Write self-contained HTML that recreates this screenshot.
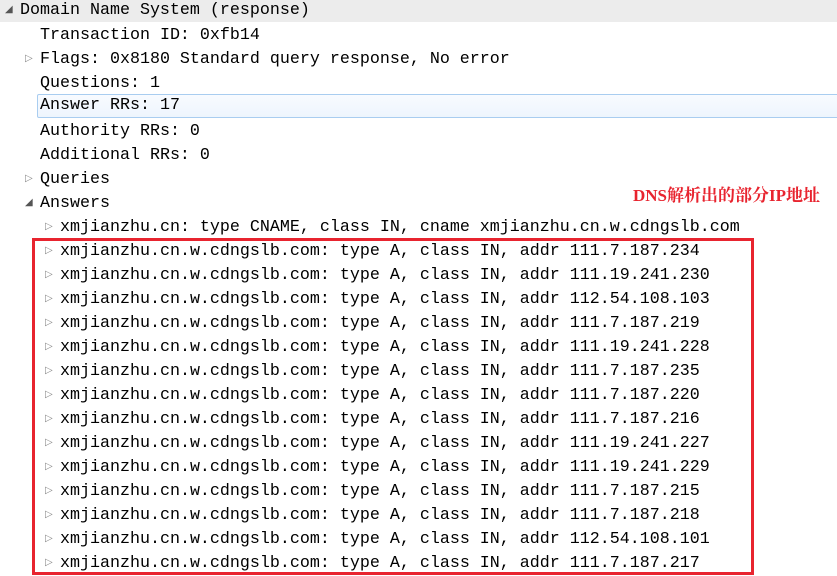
<!DOCTYPE html>
<html><head><meta charset="utf-8"><style>
body{margin:0;width:837px;height:574px;background:#fff;overflow:hidden;position:relative;font-family:"Liberation Mono",monospace;font-size:16.67px;color:#000}
.r{position:absolute;left:0;right:0;height:24px;line-height:24px;white-space:pre}
.t{position:absolute;font-size:10px;color:#888;line-height:24px}
</style></head><body>
<div class="r" style="top:0;height:22px;background:#ececec"></div>
<div style="position:absolute;left:37px;right:-2px;top:94px;height:22px;border:1px solid #a9cdf0;border-radius:2px;background:linear-gradient(#f8fbff,#eef5fd)"></div>
<div class="r" style="top:-1px"><span class="t" style="left:5px;color:#555">◢</span><span style="position:absolute;left:20px">Domain Name System (response)</span></div>
<div class="r" style="top:24px"><span style="position:absolute;left:40px">Transaction ID: 0xfb14</span></div>
<div class="r" style="top:48px"><span class="t" style="left:25px">▷</span><span style="position:absolute;left:40px">Flags: 0x8180 Standard query response, No error</span></div>
<div class="r" style="top:72px"><span style="position:absolute;left:40px">Questions: 1</span></div>
<div class="r" style="top:94px"><span style="position:absolute;left:40px">Answer RRs: 17</span></div>
<div class="r" style="top:120px"><span style="position:absolute;left:40px">Authority RRs: 0</span></div>
<div class="r" style="top:144px"><span style="position:absolute;left:40px">Additional RRs: 0</span></div>
<div class="r" style="top:168px"><span class="t" style="left:25px">▷</span><span style="position:absolute;left:40px">Queries</span></div>
<div class="r" style="top:192px"><span class="t" style="left:25px;color:#555">◢</span><span style="position:absolute;left:40px">Answers</span></div>
<div class="r" style="top:216px"><span class="t" style="left:45px">▷</span><span style="position:absolute;left:60px">xmjianzhu.cn: type CNAME, class IN, cname xmjianzhu.cn.w.cdngslb.com</span></div>
<div id="rows"></div>
<div style="position:absolute;left:633px;top:181px;font:bold 17px 'Liberation Serif','Noto Serif CJK SC',serif;color:#e8242f;white-space:nowrap">DNS解析出的部分IP地址</div>
<div style="position:absolute;left:32px;top:238px;width:716px;height:331px;border:3px solid #e8242f;box-sizing:content-box"></div>
<script>
var ips=["111.7.187.234","111.19.241.230","112.54.108.103","111.7.187.219","111.19.241.228","111.7.187.235","111.7.187.220","111.7.187.216","111.19.241.227","111.19.241.229","111.7.187.215","111.7.187.218","112.54.108.101","111.7.187.217"];
var h="";ips.forEach(function(ip,i){h+='<div class="r" style="top:'+(240+24*i)+'px"><span class="t" style="left:45px">▷</span><span style="position:absolute;left:60px">xmjianzhu.cn.w.cdngslb.com: type A, class IN, addr '+ip+'</span></div>';});
document.getElementById("rows").innerHTML=h;
</script>
</body></html>
